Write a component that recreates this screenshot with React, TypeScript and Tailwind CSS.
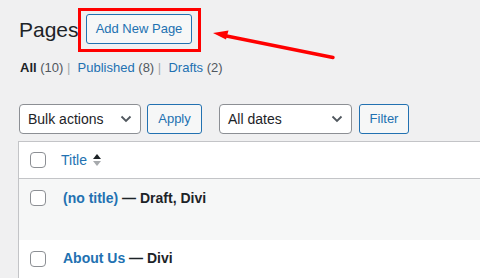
import React from "react";

const font = { fontFamily: '"Liberation Sans", Arial, sans-serif' };

function Checkbox() {
  return <span className="block w-4 h-4 rounded-[4px] border border-[#8c8f94] bg-white shrink-0" />;
}

function Chevron() {
  return (
    <svg width="12" height="8" viewBox="0 0 12 8" className="shrink-0">
      <path d="M1.5 1.5 L6 6 L10.5 1.5" fill="none" stroke="#50575e" strokeWidth="1.8" />
    </svg>
  );
}

export default function App() {
  return (
    <div
      className="relative w-[480px] h-[278px] overflow-hidden bg-[#f0f0f1] text-[#1d2327]"
      style={font}
    >
      {/* heading row */}
      <div className="flex items-center pl-[19px] pt-[8px]">
        <h1 className="w-[59px] text-[21px] leading-[44px] font-normal">Pages</h1>
        <div className="border-[3px] border-[#ff0000] pl-[5px] pr-[6px] pt-[3px] pb-[5px]">
          <button className="w-[106px] h-[30px] rounded-[3px] border border-[#2271b1] bg-[#f6f7f7] text-[13px] text-[#2271b1]">
            Add New Page
          </button>
        </div>
      </div>

      {/* status links */}
      <div className="pl-[20px] mt-[6px] text-[13px] leading-[20px] text-[#50575e] whitespace-pre">
        <span className="font-bold text-[#1d2327]">All</span> (10) <span className="text-[#a7aaad]">|</span>{"  "}
        <span className="text-[#2271b1]">Published</span> (8) <span className="text-[#a7aaad]">|</span>{"  "}
        <span className="text-[#2271b1]">Drafts</span> (2)
      </div>

      {/* table nav */}
      <div className="flex items-center pl-[19px] mt-[26px] h-[30px]">
        <div className="flex items-center justify-between w-[122px] h-[30px] rounded-[4px] border border-[#8c8f94] bg-white pl-[8px] pr-[8px] text-[14px]">
          <span>Bulk actions</span>
          <Chevron />
        </div>
        <button className="ml-[6px] w-[55px] h-[30px] rounded-[3px] border border-[#2271b1] bg-[#f6f7f7] text-[13px] text-[#2271b1]">
          Apply
        </button>
        <div className="ml-[17px] flex items-center justify-between w-[133px] h-[30px] rounded-[4px] border border-[#8c8f94] bg-white pl-[8px] pr-[8px] text-[14px]">
          <span>All dates</span>
          <Chevron />
        </div>
        <button className="ml-[7px] w-[50px] h-[30px] rounded-[3px] border border-[#2271b1] bg-[#f6f7f7] text-[13px] text-[#2271b1]">
          Filter
        </button>
      </div>

      {/* table */}
      <div className="ml-[18px] mt-[7px] border-l border-t border-[#c3c4c7] bg-white">
        <div className="flex items-center h-[37px] border-b border-[#c3c4c7] pl-[11px]">
          <Checkbox />
          <span className="ml-[15px] text-[14px] text-[#2271b1]">Title</span>
          <svg width="10" height="14" viewBox="0 0 10 14" className="ml-[5px]">
            <path d="M1 6 L5 1 L9 6 Z" fill="#1d2327" />
            <path d="M1 8 L5 13 L9 8 Z" fill="#a7aaad" />
          </svg>
        </div>
        <div className="flex items-start h-[61px] bg-[#f6f7f7] pl-[11px] pt-[11px]">
          <Checkbox />
          <span className="ml-[17px] -mt-[2px] text-[14px] font-bold">
            <span className="text-[#2271b1]">(no title)</span> — Draft, Divi
          </span>
        </div>
        <div className="flex items-start h-[60px] bg-white pl-[11px] pt-[11px]">
          <Checkbox />
          <span className="ml-[17px] -mt-[3px] text-[14px] font-bold">
            <span className="text-[#2271b1]">About Us</span> — Divi
          </span>
        </div>
      </div>

      {/* annotation arrow */}
      <svg className="absolute left-0 top-0 pointer-events-none" width="480" height="278">
        <line x1="333" y1="57.5" x2="224" y2="35.5" stroke="#ff0000" strokeWidth="3.5" strokeLinecap="round" />
        <polygon points="213,33 228.5,30.5 226,39.5" fill="#ff0000" />
      </svg>
    </div>
  );
}
